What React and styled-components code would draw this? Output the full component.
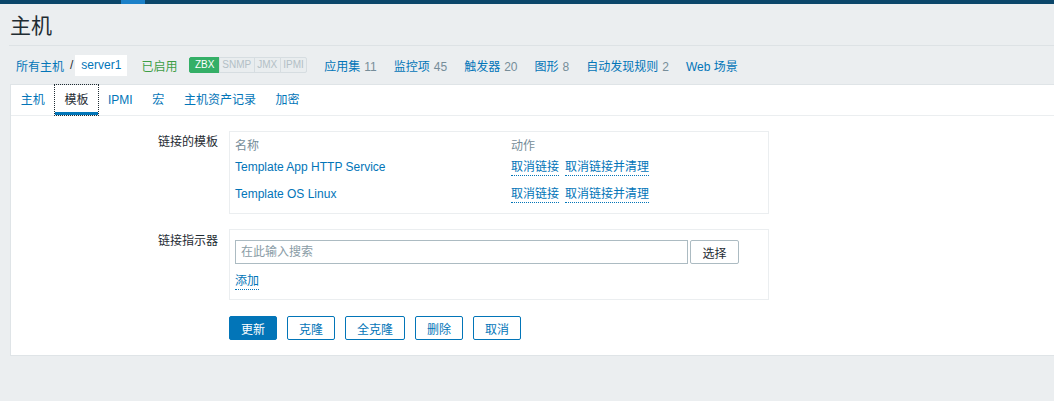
import React from "react";
import styled, { createGlobalStyle } from "styled-components";

const GlobalStyle = createGlobalStyle`
  html, body {
    margin: 0;
    padding: 0;
    background: #ebeef0;
    overflow: hidden;
  }
  body {
    font-family: "Liberation Sans", Arial, "Noto Sans CJK SC", sans-serif;
    font-size: 12px;
    color: #1f2c33;
  }
  * { box-sizing: border-box; }
`;

const TopStrip = styled.div`
  height: 4px;
  background: #0b466a;
  display: flex;
`;

const StripMark = styled.div`
  margin-left: 121px;
  width: 24px;
  background: #1b80c8;
`;

const Page = styled.div`
  padding-left: 10px;
`;

const Header = styled.div`
  height: 42px;
  padding-top: 3px;
  display: flex;
  align-items: center;
  border-bottom: 1px solid #dde2e5;
  margin-left: -1px;
  padding-left: 1px;
`;

const Title = styled.h1`
  margin: 0;
  font-size: 21px;
  line-height: 24px;
  font-weight: normal;
  color: #1f2c33;
`;

const Crumbs = styled.div`
  height: 38px;
  display: flex;
  align-items: center;
  white-space: nowrap;
`;

const Link = styled.a`
  color: #0275b8;
  text-decoration: none;
  cursor: pointer;
`;

const CrumbLink = styled(Link)`
  margin-left: 6px;
`;

const Sep = styled.span`
  margin: 0 2px 0 6px;
`;

const CurrentHost = styled.span`
  background: #ffffff;
  color: #0275b8;
  height: 21px;
  line-height: 21px;
  padding: 0 6px;
`;

const Status = styled.span`
  color: #3d9e46;
  margin-left: 14px;
`;

const Badges = styled.div`
  display: flex;
  margin-left: 12px;
`;

const Badge = styled.span`
  font-size: 10px;
  height: 16px;
  line-height: 14px;
  padding: 0 ${(p) => (p.$on ? 4.5 : 2.5)}px;
  border: 1px solid ${(p) => (p.$on ? "#34af67" : "#d6dde1")};
  background: ${(p) => (p.$on ? "#34af67" : "#e9edef")};
  color: ${(p) => (p.$on ? "#ffffff" : "#b3c0c6")};
  & + & {
    margin-left: -1px;
  }
  &:first-child {
    border-radius: 2px 0 0 2px;
  }
  &:last-child {
    border-radius: 0 2px 2px 0;
  }
`;

const NavLink = styled(Link)`
  margin-left: 17px;
`;

const Count = styled.span`
  color: #768d99;
  margin-left: 4px;
`;

const Panel = styled.div`
  background: #ffffff;
  border: 1px solid #dfe4e7;
  border-right: none;
`;

const TabBar = styled.div`
  display: flex;
  height: 31px;
  border-bottom: 1px solid #ebeef0;
`;

const Tab = styled.div`
  padding: 0 9.8px;
  height: 30px;
  line-height: 30px;
  color: ${(p) => (p.$active ? "#1f2c33" : "#0275b8")};
  border-bottom: 3px solid ${(p) => (p.$active ? "#0275b8" : "transparent")};
  outline: ${(p) => (p.$active ? "1px dotted #1f2c33" : "none")};
  outline-offset: 0;
  position: relative;
  z-index: ${(p) => (p.$active ? 1 : 0)};
  white-space: nowrap;
  cursor: pointer;
`;

const TabBody = styled.div`
  padding: 15px 0 15px;
`;

const Form = styled.div`
  display: grid;
  grid-template-columns: 208px 540px;
  column-gap: 10px;
  row-gap: 15px;
`;

const Label = styled.div`
  text-align: right;
  padding-right: 1px;
  padding-top: ${(p) => p.$top || 4}px;
  line-height: 14px;
`;

const Box = styled.div`
  border: 1px solid #ebeef0;
  padding: ${(p) => p.$pad};
`;

const TemplateTable = styled.div`
  display: grid;
  grid-template-columns: 276px 1fr;
`;

const HeadCell = styled.div`
  color: #768d99;
  line-height: 14px;
  padding-top: 1px;
  padding-bottom: 3px;
`;

const Cell = styled.div`
  line-height: 14px;
  height: 27px;
  padding-top: 4px;
  display: flex;
  align-items: flex-start;
  gap: 6px;
`;

const DottedLink = styled(Link)`
  display: inline-block;
  line-height: 14px;
  padding-bottom: 1px;
  border-bottom: 1px dotted #0275b8;
`;

const SearchRow = styled.div`
  display: flex;
  gap: 2px;
`;

const SearchInput = styled.input`
  width: 453px;
  height: 24px;
  border: 1px solid #acbbc2;
  padding: 0 5px;
  font: inherit;
  color: #1f2c33;
  outline: none;
  &::placeholder {
    color: #8a9ca6;
  }
`;

const SelectButton = styled.button`
  height: 24px;
  padding: 0 11px;
  width: 49px;
  background: #ffffff;
  border: 1px solid #acbbc2;
  border-radius: 2px;
  font: inherit;
  color: #1f2c33;
`;

const AddRow = styled.div`
  margin-top: 10px;
  height: 16px;
`;

const Actions = styled.div`
  grid-column: 2;
  display: flex;
  gap: 10px;
  margin-top: 1px;
`;

const Button = styled.button`
  height: 24px;
  padding: 0 11px;
  border-radius: 2px;
  font: inherit;
  border: 1px solid #0275b8;
  background: ${(p) => (p.$primary ? "#0275b8" : "#ffffff")};
  color: ${(p) => (p.$primary ? "#ffffff" : "#0275b8")};
  cursor: pointer;
`;

const navItems = [
  ["应用集", "11"],
  ["监控项", "45"],
  ["触发器", "20"],
  ["图形", "8"],
  ["自动发现规则", "2"],
  ["Web 场景", null],
];

const tabs = ["主机", "模板", "IPMI", "宏", "主机资产记录", "加密"];

const templates = ["Template App HTTP Service", "Template OS Linux"];

export default function App() {
  return (
    <>
      <GlobalStyle />
      <TopStrip>
        <StripMark />
      </TopStrip>
      <Page>
        <Header>
          <Title>主机</Title>
        </Header>
        <Crumbs>
          <CrumbLink>所有主机</CrumbLink>
          <Sep>/</Sep>
          <CurrentHost>server1</CurrentHost>
          <Status>已启用</Status>
          <Badges>
            <Badge $on>ZBX</Badge>
            <Badge>SNMP</Badge>
            <Badge>JMX</Badge>
            <Badge>IPMI</Badge>
          </Badges>
          {navItems.map(([name, count]) => (
            <NavLink key={name}>
              {name}
              {count && <Count>{count}</Count>}
            </NavLink>
          ))}
        </Crumbs>
        <Panel>
          <TabBar>
            {tabs.map((t) => (
              <Tab key={t} $active={t === "模板"}>
                {t}
              </Tab>
            ))}
          </TabBar>
          <TabBody>
            <Form>
              <Label $top={4}>链接的模板</Label>
              <Box $pad="6px 5px 3px">
                <TemplateTable>
                  <HeadCell>名称</HeadCell>
                  <HeadCell>动作</HeadCell>
                  {templates.map((t) => (
                    <React.Fragment key={t}>
                      <Cell>
                        <Link>{t}</Link>
                      </Cell>
                      <Cell>
                        <DottedLink>取消链接</DottedLink>
                        <DottedLink>取消链接并清理</DottedLink>
                      </Cell>
                    </React.Fragment>
                  ))}
                </TemplateTable>
              </Box>
              <Label $top={5}>链接指示器</Label>
              <Box $pad="10px 5px 9px">
                <SearchRow>
                  <SearchInput placeholder="在此输入搜索" />
                  <SelectButton>选择</SelectButton>
                </SearchRow>
                <AddRow>
                  <DottedLink>添加</DottedLink>
                </AddRow>
              </Box>
              <Actions>
                <Button $primary>更新</Button>
                <Button>克隆</Button>
                <Button>全克隆</Button>
                <Button>删除</Button>
                <Button>取消</Button>
              </Actions>
            </Form>
          </TabBody>
        </Panel>
      </Page>
    </>
  );
}
